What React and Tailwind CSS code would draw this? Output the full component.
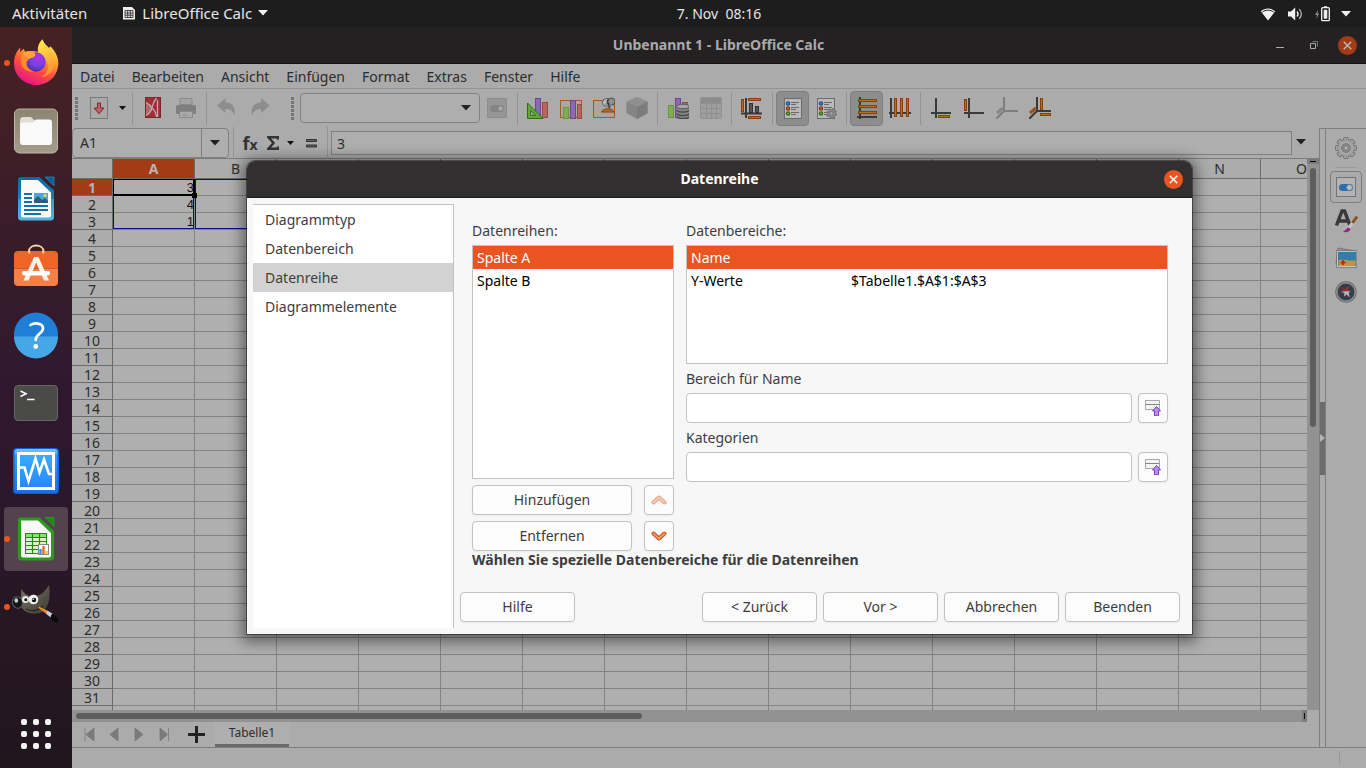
import { useState } from "react";

const columns = "ABCDEFGHIJKLMNO".split("");
const rows = Array.from({ length: 31 }, (_, i) => i + 1);
const values = { 1: 3, 2: 4, 3: 1 };
const menus = ["Datei", "Bearbeiten", "Ansicht", "Einfügen", "Format", "Extras", "Fenster", "Hilfe"];
const pages = ["Diagrammtyp", "Datenbereich", "Datenreihe", "Diagrammelemente"];

function Icon({ size = 22, children }) {
    return (
        <svg width={size} height={size} viewBox={`0 0 ${size} ${size}`} fill="none" aria-hidden="true" className="shrink-0">
            {children}
        </svg>
    )
}

function Caret({ color = "#222" }) {
    return (
        <svg width="10" height="6" viewBox="0 0 10 6" aria-hidden="true" className="shrink-0">
            <path d="M0 0h10L5 5.500z" fill={color} />
        </svg>
    )
}

/* ---------- dock icons ---------- */

function FirefoxIcon() {
    return (
        <Icon size={48}>
            <defs>
                <linearGradient id="ffBody" x1="0.8" y1="0" x2="0.3" y2="1">
                    <stop offset="0" stopColor="#fff44f" />
                    <stop offset="0.35" stopColor="#ffa436" />
                    <stop offset="0.65" stopColor="#ff4b3e" />
                    <stop offset="1" stopColor="#e3108c" />
                </linearGradient>
                <radialGradient id="ffGlobe" cx="0.6" cy="0.3" r="0.8">
                    <stop offset="0" stopColor="#b833e1" />
                    <stop offset="0.5" stopColor="#7542e5" />
                    <stop offset="1" stopColor="#45278d" />
                </radialGradient>
                <linearGradient id="ffFlame" x1="0" y1="0" x2="0.4" y2="1">
                    <stop offset="0" stopColor="#fff44f" />
                    <stop offset="1" stopColor="#ff9a2e" />
                </linearGradient>
            </defs>
            <path d="M8.500 8.500c-.5 2-.5 3.300 0 4.800 1-1.800 1.900-2.600 3.500-3.500.2 1.600.7 2.600 1.700 3.500 4-2 9-1 12.300-.3-.8-4.500.6-9 4.500-12.500 1.300 4.200 4 6 6.300 8.300 1.400-.3 1.200-1.300 1.200-1.800 4.200 4 8.300 9.500 8.300 17C46.300 36.500 36.600 46 24.500 46S2 36.500 2 24.500C2 17.500 4.500 12 8.500 8.500z" fill="url(#ffBody)" />
            <path d="M30.500.5c1.300 4.200 4 6.500 7 9.500 4.800 5 6 10 5 16-1.500 7-7 11.500-13 12 5-3 7.500-8 6.500-13-1-6-7-8-9.500-11-1-4.500.2-9.800 4-13.500z" fill="url(#ffFlame)" opacity="0.85" />
            <circle cx="24" cy="23" r="9.700" fill="url(#ffGlobe)" />
            <path d="M10 14.500c4-3 10-2 13 0 1.300 2.500-1.500 3.800-5 4.800-1.700 1.400-2.800 2.400-3.400 3.700-.8 4.500 2.400 8.500 7.400 9.200-6 1.300-11.500-2-12.700-7.500-.7-3.700-.6-7 .7-10.200z" fill="#ff8a2a" />
            <path d="M11 13.800c4-2 9-1.500 12 .7 1.300 2.500-1.500 3.800-5 4.800-3-.5-6-2.500-7-5.500z" fill="#ffa53a" />
        </Icon>
    )
}

function FilesIcon() {
    return (
        <Icon size={48}>
            <defs>
                <linearGradient id="filesBg" x1="0" y1="0" x2="0" y2="1">
                    <stop offset="0" stopColor="#8d8472" />
                    <stop offset="1" stopColor="#a49c8a" />
                </linearGradient>
            </defs>
            <rect x="2.500" y="2" width="43" height="44" rx="5" fill="url(#filesBg)" stroke="#bdb6a6" />
            <path d="M8 13.500A3.500 3.500 0 0 1 11.500 10H19l3.500 3.500H36a3 3 0 0 1 3 3V25H8z" fill="#e2ded3" />
            <path d="M8 18.500a3 3 0 0 1 3-3h10l3-3h13a3 3 0 0 1 3 3V35a3 3 0 0 1-3 3H11a3 3 0 0 1-3-3z" fill="#fafafa" />
        </Icon>
    )
}

function WriterIcon() {
    return (
        <Icon size={48}>
            <defs>
                <linearGradient id="writerBg" x1="0" y1="0" x2="0" y2="1">
                    <stop offset="0" stopColor="#0a6a9e" />
                    <stop offset="0.5" stopColor="#1c80b3" />
                    <stop offset="0.51" stopColor="#2f9bd0" />
                    <stop offset="1" stopColor="#56b4e0" />
                </linearGradient>
            </defs>
            <path d="M33 2h9v9z" fill="#0d5f8f" stroke="#2a82b5" strokeWidth="0.800" />
            <path d="M9 2h18.500L42 15.500V42a3.500 3.500 0 0 1-3.500 3.500H9.500A3.500 3.500 0 0 1 6 42V5a3 3 0 0 1 3-3z" fill="url(#writerBg)" />
            <path d="M9 5h17l13 12.500V40.500a2 2 0 0 1-2 2H11a2 2 0 0 1-2-2z" fill="#f9f9f9" />
            <path d="M12 19h8M12 23h8M12 27h8M12 31h24M12 35h24M12 39h17" stroke="#1173a8" strokeWidth="1.800" />
            <rect x="22" y="18" width="14" height="10" fill="#4aa6dc" />
            <path d="M22 28v-3l4-4 4 4 3-2 3 3v2z" fill="#2c5f73" />
            <circle cx="33" cy="20.500" r="1.600" fill="#f7d44c" />
        </Icon>
    )
}

function StoreIcon() {
    return (
        <Icon size={48}>
            <path d="M17 8.500c0-8 14.500-8 14.500 0" stroke="#f3d9a5" strokeWidth="1.800" />
            <path d="M2 12a4 4 0 0 1 4-4h36a4 4 0 0 1 4 4v13.500H2z" fill="#f06427" />
            <path d="M2 25.500h44V39a4 4 0 0 1-4 4H6a4 4 0 0 1-4-4z" fill="#f48048" />
            <path d="M17.200 7.500v3M31.300 7.500v3" stroke="#f3d9a5" strokeWidth="1.800" />
            <path d="M22 14h4.500L37 37.500h-5L24.200 19.500 16.500 37.500h-5z" fill="#fdf0e9" />
            <rect x="10" y="28" width="28" height="4.600" rx="2.300" fill="#fff" />
        </Icon>
    )
}

function HelpIcon() {
    return (
        <Icon size={48}>
            <circle cx="24" cy="23.500" r="22" fill="#1f7fd6" />
            <path d="M2 25.500a22 22 0 0 0 44 0z" fill="#46a7e6" />
            <path d="M18.500 14c2.800-2 12.500-3 12.500 3.500 0 5-7.300 5.200-7.300 11.500" stroke="#fff" strokeWidth="2.700" strokeLinecap="round" />
            <circle cx="23.700" cy="35.500" r="2.400" fill="#fff" />
        </Icon>
    )
}

function TerminalIcon() {
    return (
        <Icon size={48}>
            <rect x="2.500" y="6.500" width="43" height="35" rx="3.500" fill="#4a4a49" stroke="#666" />
            <path d="M8.500 12l5.500 2.800L8.500 17.500" stroke="#fff" strokeWidth="1.500" />
            <path d="M15 20.500h7.500" stroke="#fff" strokeWidth="1.500" />
        </Icon>
    )
}

function MonitorIcon() {
    return (
        <Icon size={48}>
            <defs>
                <linearGradient id="vmBg" x1="0" y1="0" x2="0" y2="1">
                    <stop offset="0" stopColor="#37aeff" />
                    <stop offset="1" stopColor="#2a84ff" />
                </linearGradient>
                <linearGradient id="vmRim" x1="0" y1="0" x2="0" y2="1">
                    <stop offset="0" stopColor="#6fd0ff" />
                    <stop offset="0.15" stopColor="#3a9af8" />
                    <stop offset="1" stopColor="#1c6fe6" />
                </linearGradient>
            </defs>
            <rect x="1" y="1" width="46" height="46" rx="4" fill="#0c62dd" />
            <rect x="2.500" y="2" width="43" height="43.500" rx="3" fill="url(#vmRim)" />
            <rect x="6.500" y="6.500" width="35" height="35" fill="url(#vmBg)" stroke="#fff" strokeWidth="3" />
            <path d="M8 20.500h4.500L16.500 34l7-22.500 4 14 4.500-13 5 14.500H41" stroke="#fff" strokeWidth="2.600" />
        </Icon>
    )
}

function CalcIcon() {
    return (
        <Icon size={48}>
            <path d="M33 2.500h9v9z" fill="#1f8a12" stroke="#2f9a20" strokeWidth="0.800" />
            <path d="M9 2.500h18.500L42 16v26a3.500 3.500 0 0 1-3.500 3.500H9.500A3.500 3.500 0 0 1 6 42V5.500a3 3 0 0 1 3-3z" fill="#2c9a1c" />
            <path d="M9 5.500h17L39 18v22.500a2 2 0 0 1-2 2H11a2 2 0 0 1-2-2z" fill="#f9f9f9" />
            <rect x="13.500" y="18.500" width="21" height="20" fill="#d5f5ce" stroke="#1f8a12" />
            <rect x="14" y="19" width="20" height="3.500" fill="#8fdc80" />
            <path d="M13.500 22.500h21M13.500 26.500h21M13.500 30.500h21M13.500 34.500h21M20.500 18.500v20M27.500 18.500v20" stroke="#1f8a12" strokeWidth="1.200" />
            <rect x="26.500" y="29.500" width="10" height="10" fill="#fff" stroke="#888" />
            <path d="M28.500 39v-5" stroke="#2e96e0" strokeWidth="2.400" />
            <path d="M31.500 39v-8" stroke="#e8681f" strokeWidth="2.400" />
            <path d="M34.500 39v-3" stroke="#f3c230" strokeWidth="2.400" />
        </Icon>
    )
}

function GimpIcon() {
    return (
        <Icon size={48}>
            <defs>
                <linearGradient id="gimpFur" x1="0" y1="0" x2="1" y2="1">
                    <stop offset="0" stopColor="#7b7467" />
                    <stop offset="1" stopColor="#3f3b33" />
                </linearGradient>
            </defs>
            <path d="M9.500 6c2 4 5 6.500 9 7.200 8 1 14-3.200 18.500-11.200 1.300 9 .8 19-4 25-4 4-12 4.500-18 2-4-1.600-6-4.500-6.500-8.500z" fill="url(#gimpFur)" />
            <ellipse cx="5.500" cy="19.500" rx="5" ry="5.800" transform="rotate(-20 5.500 19.500)" fill="#15181b" stroke="#59605f" />
            <ellipse cx="4.300" cy="17.500" rx="1.800" ry="2.200" fill="#c8d0d2" />
            <circle cx="13.500" cy="16.500" r="3.500" fill="#e8e8e8" />
            <circle cx="13.800" cy="16.700" r="1.500" fill="#111" />
            <circle cx="21.500" cy="16.500" r="4.800" fill="#f0f0f0" />
            <circle cx="22" cy="17" r="2.200" fill="#111" />
            <circle cx="21.300" cy="16.200" r="0.800" fill="#fff" />
            <path d="M14 26c6 3 13 1.500 17-3" stroke="#25231f" strokeWidth="1.300" />
            <path d="M27 23.500l9 4.500-1.500 3-8-6z" fill="#e8902a" />
            <path d="M35.500 27.500l5 3.200-2 3.500-4.500-3.500z" fill="#c9ccd0" />
            <path d="M39 32c3-1.500 7 1 7.500 7.500-4 0-8-2-7.500-7.500z" fill="#0b0b0b" />
        </Icon>
    )
}

const dockItems = [
    { name: "Firefox", icon: FirefoxIcon, running: true },
    { name: "Dateien", icon: FilesIcon },
    { name: "Writer", icon: WriterIcon },
    { name: "Software", icon: StoreIcon },
    { name: "Hilfe", icon: HelpIcon },
    { name: "Terminal", icon: TerminalIcon },
    { name: "Systemmonitor", icon: MonitorIcon },
    { name: "Calc", icon: CalcIcon, running: true, active: true },
    { name: "GIMP", icon: GimpIcon, running: true },
];

function Dock() {
    return (
        <nav className="flex w-18 shrink-0 flex-col items-center gap-1 bg-linear-to-b from-[#472122] via-[#2f182e] to-[#20161e] py-1">
            {dockItems.map(item => (
                <button
                    key={item.name}
                    aria-label={item.name}
                    className={item.active
                        ? "relative flex size-16 shrink-0 items-center justify-center rounded bg-[#54434f]"
                        : "relative flex size-16 shrink-0 items-center justify-center rounded"}
                >
                    {item.running && <span className="absolute left-0 size-1.5 rounded-full bg-[#e95420]" />}
                    <item.icon />
                </button>
            ))}
            <button aria-label="Anwendungen anzeigen" className="mt-auto mb-[15px] grid grid-cols-3 gap-1.5">
                {rows.slice(0, 9).map(n => <span key={n} className="size-1.5 rounded-xs bg-[#f2f2f2]" />)}
            </button>
        </nav>
    )
}

function TopBar() {
    return (
        <header className="grid h-[27px] shrink-0 grid-cols-[1fr_auto_1fr] items-center bg-[#1d1d1d] pl-18 text-sm text-[#e6e6e6]">
            <div className="-ml-15 flex items-center text-[15px]">
                <button className="mr-[35px]">Aktivitäten</button>
                <button className="flex items-center gap-1.5">
                    <Icon size={14}>
                        <path d="M1 1h9l3 3v9.500H1z" fill="#eee" />
                        <path d="M3 4.500h8v7H3zM3 7h8M3 9.200h8M5.700 4.500v7M8.300 4.500v7" stroke="#333" strokeWidth="0.900" />
                    </Icon>
                    LibreOffice Calc
                    <Caret color="#f2f2f2" />
                </button>
            </div>
            <button className="whitespace-pre">7. Nov  08:16</button>
            <button aria-label="System" className="flex items-center justify-end gap-[11px] pr-[15px]">
                <Icon size={16}>
                    <path d="M8 14.500L.8 5.300C5 1.600 11 1.600 15.200 5.300z" fill="#f2f2f2" />
                    <path d="M2.200 6.200c3.500-2.700 8.100-2.700 11.600 0" stroke="#1d1d1d" />
                </Icon>
                <Icon size={16}>
                    <path d="M1 5.500h3L8.200 1.500v13L4 10.500H1z" fill="#f2f2f2" />
                    <path d="M10 5.500c1.300 1.500 1.300 3.500 0 5" stroke="#f2f2f2" strokeWidth="1.300" />
                    <path d="M12.300 3.200c2.500 3 2.500 6.600 0 9.600" stroke="#bbb" strokeWidth="1.200" />
                </Icon>
                <Icon size={16}>
                    <path d="M4 4L1 9h2l-.5 4L5 7.500H3.500z" fill="#8c8c8c" />
                    <rect x="7.700" y="1.700" width="7.600" height="13" rx="1" stroke="#f2f2f2" strokeWidth="1.300" />
                    <path d="M10 .7h3M10.200 4.200h2.600v8h-2.600z" fill="#f2f2f2" stroke="#f2f2f2" />
                </Icon>
                <Caret color="#f2f2f2" />
            </button>
        </header>
    )
}

function CloseCross({ className, label }) {
    return (
        <button aria-label={label} className={className}>
            <svg width="9" height="9" viewBox="0 0 9 9" stroke="currentColor" strokeWidth="1.400" aria-hidden="true">
                <path d="M.7.7l7.600 7.600M8.300.7L.7 8.300" />
            </svg>
        </button>
    )
}

/* ---------- toolbar ---------- */

function Separator() {
    return <span className="mr-[3px] ml-1 h-[33px] w-px shrink-0 bg-[#939393]" />
}

function Handle() {
    return (
        <svg width="3" height="23" viewBox="0 0 3 23" className="shrink-0" aria-hidden="true">
            <path d="M1.500 0v23" stroke="#757575" strokeWidth="3" strokeDasharray="3 1" />
        </svg>
    )
}

function ToolButton({ label, pressed, children }) {
    return (
        <button
            aria-label={label}
            className={pressed
                ? "flex h-[35px] w-[33px] shrink-0 items-center justify-center rounded border border-[#7f7f7f] bg-[#8d8d8d] pb-px pl-px"
                : "flex h-[35px] w-[33px] shrink-0 items-center justify-center pb-px pl-px"}
        >
            <Icon>{children}</Icon>
        </button>
    )
}

const Bar = ({ x, y, w, h, fill, stroke }) => (
    <rect x={x + 0.5} y={y + 0.5} width={w - 1} height={h - 1} fill={fill} stroke={stroke} />
);

const green = { fill: "#7fae4c", stroke: "#67973a" };
const purple = { fill: "#8c68ac", stroke: "#6f4696" };
const red = { fill: "#b3685b", stroke: "#9c4a3e" };
const orange = { fill: "#b5701f", stroke: "#8a3f08" };

function LegendRows() {
    return (
        <>
            <rect x="2.500" y="1.500" width="17" height="20" fill="#b9b9b9" stroke="#6c6c6c" />
            <circle cx="6" cy="6.500" r="1.600" stroke="#1b4f8f" strokeWidth="1.300" fill="#4b86c6" />
            <circle cx="6" cy="11.500" r="1.600" stroke="#8a3110" strokeWidth="1.300" fill="#c4713f" />
            <circle cx="6" cy="16.500" r="1.600" stroke="#2c7010" strokeWidth="1.300" fill="#6bb04a" />
            <path d="M9 5.500h8M9 7.500h5M9 10.500h8M9 12.500h5M9 15.500h8M9 17.500h5" stroke="#6a6a6a" />
        </>
    )
}

function Toolbar() {
    return (
        <div className="flex h-[39px] shrink-0 items-center pl-[3px]">
            <Handle />
            <button aria-label="Speichern" className="ml-[5px] flex w-[45px] shrink-0 items-center justify-between pr-[2px] pb-px pl-[5px]">
                <Icon>
                    <rect x="2.500" y="0.500" width="17" height="21" fill="#a8a8a8" stroke="#7a7a7a" />
                    <path d="M9.500 6h3v5h3.300L11 16.800 6.200 11h3.300z" fill="#b8686c" stroke="#8f1b23" />
                </Icon>
                <svg width="7" height="4" viewBox="0 0 7 4" aria-hidden="true"><path d="M0 0h7L3.500 4z" fill="#111" /></svg>
            </button>
            <Separator />
            <ToolButton label="Als PDF exportieren">
                <rect x="3.500" y="0.500" width="15" height="20" fill="#a03038" stroke="#7c2228" />
                <path d="M4 5.500c3 1.500 5 3.500 6 5.500-1 3.500-3.500 6-6 7.500z" fill="#b0666a" />
                <path d="M4 5.500c3 1.500 5 3.500 6 5.500-1 3.500-3.500 6-6 7.500M14.500 1c-2.500 3-4 6.500-4.500 10 2.500 2 4 5 4.500 9M15.500 3v17" stroke="#bfb0b0" strokeWidth="1.200" />
            </ToolButton>
            <ToolButton label="Drucken">
                <path d="M5 1.500h12v6H5z" fill="#a3a3a3" stroke="#898989" />
                <rect x="1" y="8" width="20" height="9" rx="1.500" fill="#7f7f7f" />
                <path d="M4.500 14.500h13v6h-13z" fill="#aaa" stroke="#8a8a8a" />
                <path d="M7 18h5" stroke="#8a8a8a" />
            </ToolButton>
            <Separator />
            <ToolButton label="Rückgängig">
                <path d="M1 8.500L9.500 1v4.500c7 0 10.500 4.500 9 13-1.300-4.500-4-6.500-9-6.500V16z" fill="#8d8d8d" />
            </ToolButton>
            <ToolButton label="Wiederherstellen">
                <path d="M20.500 8.500L12 1v4.500c-7 0-10.500 4.500-9 13 1.300-4.500 4-6.500 9-6.500V16z" fill="#8d8d8d" />
            </ToolButton>
            <span className="w-[15px] shrink-0" />
            <Handle />
            <span className="relative mb-px ml-1.5 flex shrink-0 items-center">
                <select aria-label="Diagrammelement auswählen" className="h-[30px] w-[180px] appearance-none rounded border border-[#828282] bg-[#aeaeae] px-2 text-sm">
                    <option></option>
                </select>
                <span className="pointer-events-none absolute right-[9px]"><Caret /></span>
            </span>
            <ToolButton label="Auswahl formatieren">
                <rect x="1.500" y="1.500" width="19" height="19" fill="#969696" stroke="#8d8d8d" />
                <rect x="4" y="8" width="14" height="7" rx="3.500" fill="#848484" />
                <circle cx="14.500" cy="11.500" r="2.800" fill="#a8a8a8" stroke="#808080" />
            </ToolButton>
            <Separator />
            <ToolButton label="Diagrammtyp">
                <Bar x={8} y={1} w={6} h={19} {...purple} />
                <Bar x={15} y={5} w={6} h={16} {...red} />
                <path d="M.5 6v15.500H16z" fill="#63a63b" stroke="#2f6d10" />
                <path d="M3.700 13.500v4.800h5z" fill="#a5b59c" stroke="#2f6d10" />
            </ToolButton>
            <ToolButton label="Diagrammfläche">
                <rect x="0.500" y="3.500" width="21" height="17" fill="#aca7a4" stroke="#a3592a" />
                <Bar x={3} y={10} w={6} h={12} {...green} />
                <Bar x={10} y={3} w={6} h={19} {...purple} />
                <Bar x={17} y={7} w={5} h={15} {...red} />
            </ToolButton>
            <ToolButton label="Diagrammwand">
                <rect x="0.500" y="3.500" width="21" height="17" fill="#a9a5a2" stroke="#a3592a" />
                <circle cx="13.500" cy="5.500" r="4" fill="#c0c0c0" stroke="#555" />
                <circle cx="18.500" cy="4.500" r="3.500" fill="#909090" stroke="#4d4d4d" />
                <path d="M12 8l4 1v4" stroke="#8b8b8b" strokeWidth="4" />
                <path d="M15.500 2c-2 2-1.500 4.500 0 5l1 4" stroke="#333" strokeWidth="1.200" />
                <path d="M8.500 15c1.500-2.500 3.500-3 6.500-3s5 1 6.500 3z" fill="#bd6d1b" stroke="#86430a" />
            </ToolButton>
            <ToolButton label="3D-Ansicht">
                <path d="M11 0l10.500 4.800v11.500L11 22 .5 16.300V4.800z" fill="#858585" />
                <path d="M11 0l10.500 4.800L11 10.300.5 4.800z" fill="#8f8f8f" />
                <path d="M11 10.300V22L21.500 16.300V4.800z" fill="#7c7c7c" />
            </ToolButton>
            <Separator />
            <ToolButton label="Datenbereiche">
                <Bar x={1} y={8} w={6} h={13} {...green} />
                <Bar x={8} y={1} w={6} h={20} {...purple} />
                <Bar x={15} y={5} w={6} h={6} {...red} />
                <path d="M9.500 10v10c0 3.200 13 3.200 13 0V10z" fill="#848484" />
                <ellipse cx="16" cy="9.500" rx="6.300" ry="2.300" fill="#a5a5a5" stroke="#5a5a5a" />
                <path d="M9.700 13c1 2.800 11.600 2.800 12.600 0M9.700 16.500c1 2.800 11.600 2.800 12.600 0M9.700 19.500c1 2.800 11.600 2.800 12.600 0" stroke="#474747" strokeWidth="1.200" />
            </ToolButton>
            <ToolButton label="Datentabelle">
                <rect x="0.500" y="0.500" width="21" height="21" rx="1" fill="#9e9e9e" stroke="#929292" />
                <path d="M1 3.500h20" stroke="#8c8c8c" strokeWidth="5" />
                <path d="M1 6.500h20M1 11.500h20M1 16.500h20M6.500 1v20M11.500 1v20M16.500 1v20" stroke="#8f8f8f" />
            </ToolButton>
            <Separator />
            <ToolButton label="Titel">
                <path d="M5 1v20M0 16.500h21" stroke="#3a3a3a" strokeWidth="2" />
                <Bar x={0} y={2} w={3} h={13} {...orange} />
                <Bar x={7} y={1} w={13} h={3} {...orange} />
                <Bar x={7} y={19} w={13} h={3} {...orange} />
                <Bar x={8} y={6} w={4} h={10} fill="#555" stroke="#333" />
                <Bar x={14} y={9} w={4} h={7} fill="#555" stroke="#333" />
            </ToolButton>
            <Separator />
            <ToolButton label="Legende ein-/ausblenden" pressed>
                <LegendRows />
            </ToolButton>
            <ToolButton label="Legende">
                <LegendRows />
                <circle cx="16.500" cy="16.500" r="4.500" fill="#8a8a8a" stroke="#747474" strokeWidth="2" strokeDasharray="2 1.500" />
                <circle cx="16.500" cy="16.500" r="1.800" fill="#aaa" stroke="#707070" />
            </ToolButton>
            <Separator />
            <ToolButton label="Horizontale Gitter" pressed>
                <path d="M4 0v22M1 20h20" stroke="#3a3a3a" strokeWidth="2" />
                <Bar x={2} y={2} w={19} h={3} {...orange} />
                <Bar x={2} y={8} w={19} h={3} {...orange} />
                <Bar x={2} y={14} w={19} h={3} {...orange} />
            </ToolButton>
            <ToolButton label="Vertikale Gitter">
                <path d="M2 1v20M0 16h22" stroke="#3a3a3a" strokeWidth="2" />
                <Bar x={5} y={1} w={3} h={19} {...orange} />
                <Bar x={11} y={1} w={3} h={19} {...orange} />
                <Bar x={17} y={1} w={3} h={19} {...orange} />
            </ToolButton>
            <Separator />
            <ToolButton label="X-Achse">
                <path d="M6 1v20M1 16h20" stroke="#3a3a3a" strokeWidth="2" />
                <Bar x={8} y={18} w={12} h={3} {...orange} />
            </ToolButton>
            <ToolButton label="Y-Achse">
                <path d="M6 1v20M1 16h20" stroke="#3a3a3a" strokeWidth="2" />
                <Bar x={1} y={2} w={3} h={12} {...orange} />
            </ToolButton>
            <ToolButton label="Z-Achse">
                <path d="M8 0v14h14M8 14l-8 8" stroke="#7e7e7e" strokeWidth="2" />
                <path d="M1 16l6-5" stroke="#868686" strokeWidth="3" />
            </ToolButton>
            <ToolButton label="Alle Achsen">
                <path d="M8 0v14h14M8 14l-8 8" stroke="#3a3a3a" strokeWidth="2" />
                <path d="M1 16l6-5" stroke="#9a5212" strokeWidth="3" />
                <Bar x={11} y={1} w={3} h={12} {...orange} />
                <Bar x={11} y={16} w={11} h={3} {...orange} />
            </ToolButton>
        </div>
    )
}

function FormulaBar() {
    return (
        <div className="flex h-[31px] shrink-0 items-start border-b border-[#7b7b7b]">
            <div className="flex h-[30px] w-[157px] shrink-0 rounded border border-[#808080] bg-[#aeaeae]">
                <input aria-label="Namensfeld" defaultValue="A1" className="w-[129px] border-r border-[#808080] px-[7px] text-sm text-[#2c2c2c]" />
                <button aria-label="Namen öffnen" className="flex flex-1 items-center justify-center"><Caret /></button>
            </div>
            <div className="flex h-[30px] shrink-0 items-center">
                <Separator />
                <button aria-label="Funktions-Assistent" className="ml-1 w-[18px] text-lg font-bold text-[#333]">f<span className="text-sm">x</span></button>
                <button aria-label="Funktion auswählen" className="ml-2 flex items-center gap-2">
                    <svg width="12" height="14" viewBox="0 0 12 14" aria-hidden="true"><path d="M11 3.500V1.300H1.500L6.500 7l-5 5.700H11v-2.200" fill="none" stroke="#333" strokeWidth="2.400" /></svg>
                    <svg width="7" height="4" viewBox="0 0 7 4" aria-hidden="true"><path d="M0 0h7L3.500 4z" fill="#111" /></svg>
                </button>
                <button aria-label="Formel" className="ml-3">
                    <svg width="11" height="9" viewBox="0 0 11 9" aria-hidden="true"><path d="M.5.500h10v2H.5zM.5 6h10v2H.5z" fill="#666" stroke="#333" /></svg>
                </button>
                <span className="w-1.5" />
                <Separator />
            </div>
            <input aria-label="Eingabezeile" defaultValue="3" className="mt-[3px] h-6 min-w-0 flex-1 border border-[#808080] bg-[#aeaeae] px-[5px] text-sm text-[#2c2c2c]" />
            <button aria-label="Eingabezeile erweitern" className="flex h-7 w-[27px] items-center justify-start pl-1"><Caret /></button>
        </div>
    )
}

function Sheet() {
    return (
        <div className="relative min-w-0 flex-1 overflow-hidden bg-[#afafaf]">
            <table className="border-separate border-spacing-0 text-[#2c2c2c]">
                <thead>
                    <tr>
                        <th className="h-5 w-[41px] min-w-[41px] border-r border-b border-[#6b6b6b] bg-[#acacac] p-0"></th>
                        {columns.map(col => (
                            <th
                                key={col}
                                className={col === "A"
                                    ? "h-5 min-w-[82px] border-r border-b border-[#6b6b6b] bg-[#a33b17] p-0 text-sm leading-4 font-bold text-[#b5b5b5]"
                                    : "h-5 min-w-[82px] border-r border-b border-[#6b6b6b] bg-[#acacac] p-0 text-sm leading-4 font-normal"}
                            >
                                {col}
                            </th>
                        ))}
                    </tr>
                </thead>
                <tbody>
                    {rows.map(row => (
                        <tr key={row}>
                            <th
                                className={row === 1
                                    ? "h-[17px] border-r border-b border-[#6b6b6b] bg-[#a33b17] p-0 pt-px text-sm leading-[15px] font-bold text-[#b5b5b5]"
                                    : "h-[17px] border-r border-b border-[#6b6b6b] bg-[#acacac] p-0 pt-px text-sm leading-[15px] font-normal"}
                            >
                                {row}
                            </th>
                            {columns.map(col => (
                                <td key={col} className="h-[17px] border-r border-b border-[#838383] p-0 pt-px text-right font-['Liberation_Sans',sans-serif] text-[13px] leading-[15px] text-[#111]">
                                    {col === "A" && values[row]}
                                </td>
                            ))}
                        </tr>
                    ))}
                    <tr>
                        <th className="h-[17px] border-r border-[#6b6b6b] bg-[#acacac] p-0"></th>
                        {columns.map(col => <td key={col} className="border-r border-[#838383] p-0"></td>)}
                    </tr>
                </tbody>
            </table>
            {/* range frames and the cell cursor */}
            <div className="absolute top-5 left-[41px] h-[50px] w-[81px] border border-[#0a0a95]" />
            <div className="absolute top-5 left-[123px] h-[50px] w-[82px] border border-[#0a0a95]" />
            <div className="absolute top-5 left-[41px] h-[17px] w-[82px] border border-r-2 border-b-2 border-black" />
            <div className="absolute top-[34px] left-[120px] size-[5px] bg-black" />
        </div>
    )
}

function SheetArea() {
    return (
        <div className="flex min-w-0 flex-1 flex-col">
            <FormulaBar />
            <div className="flex min-h-0 flex-1">
                <Sheet />
                <div className="w-3 shrink-0 bg-[#929292]">
                    <div className="flex h-[5px] items-center justify-center bg-[#7c7c7c]"><span className="h-px w-1.5 bg-black" /></div>
                    <div className="mx-auto mt-1 h-[47%] w-1.5 rounded-full bg-[#5e5e5e]" />
                </div>
            </div>
            <div className="mr-3 flex h-3 shrink-0 items-center bg-[#929292] pl-1">
                <div className="h-1.5 w-[46%] rounded-full bg-[#5e5e5e]" />
                <div className="ml-auto flex h-full w-[5px] items-center justify-center bg-[#7c7c7c]"><span className="h-1.5 w-px bg-black" /></div>
            </div>
            <div className="flex h-[25px] shrink-0 items-stretch pl-[10px]">
                <div className="flex gap-[11px] pr-4">
                    {["M3 1v13M12 1v13L4 7.500z", "M11 1v13L3 7.500z", "M3 1v13l8-6.500z", "M11.500 1v13M3 1v13l7.500-6.500z"].map(d => (
                        <button key={d} aria-label="Tabelle wechseln">
                            <svg width="14" height="15" viewBox="0 0 14 15" aria-hidden="true"><path d={d} fill="#7a7a7a" stroke="#7a7a7a" strokeWidth="0.800" /></svg>
                        </button>
                    ))}
                </div>
                <button aria-label="Tabelle einfügen" className="mr-[10px] ml-px">
                    <svg width="17" height="17" viewBox="0 0 17 17" aria-hidden="true"><path d="M8.500 0v17M0 8.500h17" stroke="#222" strokeWidth="3" /></svg>
                </button>
                <button className="w-[74px] border-b-3 border-[#696969] bg-[#afafaf] text-xs text-[#2c2c2c]">Tabelle1</button>
            </div>
        </div>
    )
}

const teeth = [0, 45, 90, 135, 180, 225, 270, 315];

function Sidebar() {
    return (
        <>
            <div className="flex w-[7px] shrink-0 items-center border-x border-t border-[#7f7f7f]">
                <button aria-label="Seitenleiste" className="flex h-[73px] w-full items-center bg-[#6c6c6c]">
                    <svg width="5" height="8" viewBox="0 0 5 8" aria-hidden="true"><path d="M0 0l5 4-5 4z" fill="#b5b5b5" /></svg>
                </button>
            </div>
            <aside className="flex w-10 shrink-0 flex-col items-center border-t border-[#7f7f7f] pt-1">
                <button aria-label="Einstellungen" className="flex h-[30px] shrink-0 items-center">
                    <Icon>
                        {teeth.map(a => (
                            <rect key={a} x="8.500" y="0.500" width="5" height="5" rx="1" fill="#a5a5a5" stroke="#707070" transform={`rotate(${a} 11 11)`} />
                        ))}
                        <circle cx="11" cy="11" r="8.300" fill="#a5a5a5" stroke="#808080" strokeWidth="0.700" />
                        <circle cx="11" cy="11" r="4.300" fill="#8f8f8f" stroke="#757575" />
                        <circle cx="11" cy="11" r="2.200" fill="#b5b5b5" stroke="#757575" />
                    </Icon>
                </button>
                <span className="mt-1 mb-[3px] h-px w-[22px] shrink-0 bg-[#999]" />
                <button aria-label="Eigenschaften" className="flex size-8 shrink-0 items-center justify-center rounded border border-[#7d7d7d]">
                    <Icon>
                        <rect x="1.500" y="1.500" width="19" height="19" fill="#b3b3b3" stroke="#737373" />
                        <rect x="4" y="8" width="14" height="7" rx="3.500" fill="#2d6da8" />
                        <circle cx="14.500" cy="11.500" r="3" fill="#bdbdbd" stroke="#5d7d9a" />
                    </Icon>
                </button>
                <button aria-label="Formatvorlagen" className="flex h-9 shrink-0 items-center">
                    <Icon size={24}>
                        <path d="M2.500 16.500L8 2h2.500l5.500 14.500M5 12h8.500" stroke="#3a3a3a" strokeWidth="3.500" />
                        <path d="M23 7.500l-5 7" stroke="#8a561c" strokeWidth="3" />
                        <path d="M18.500 14l-4 5" stroke="#c4c4c4" strokeWidth="3" />
                        <path d="M15 18.500c-2 0-3.500 3-6 4 3.500 1.500 7 .5 7.500-2.500z" fill="#8e2d86" />
                    </Icon>
                </button>
                <button aria-label="Galerie" className="flex h-[38px] shrink-0 items-center">
                    <Icon>
                        <path d="M3 1l17 3-1 15L1 17z" fill="#7fa59b" stroke="#777" />
                        <rect x="2.500" y="4.500" width="19" height="15" fill="#2f7fae" stroke="#c6c6c6" />
                        <path d="M3.500 13c5-2 10 2 17 0v6h-17z" fill="#bd9448" />
                        <path d="M8 13v5M5.500 15.500h5" stroke="#b5301b" strokeWidth="2" />
                        <rect x="1.700" y="3.700" width="20" height="17" stroke="#6e6e6e" strokeWidth="0.700" />
                    </Icon>
                </button>
                <button aria-label="Navigator" className="flex h-[30px] shrink-0 items-center">
                    <Icon>
                        <circle cx="11" cy="11" r="9.500" fill="#333d4e" stroke="#6b6b6b" strokeWidth="2.500" />
                        <circle cx="11" cy="11" r="9.300" stroke="#a0a0a0" strokeWidth="0.900" />
                        <path d="M12.500 9l3 2-2 .8 1.500 4.700-3.500-3-2.500 2 .5-3.500L6 11l3.500-1.500z" fill="#b8b8b8" />
                        <path d="M14.500 4.500L13 9l5 1.500-6.500-.3L4 11l4-2.500L6.500 6l3.500 2z" fill="#a12a30" />
                    </Icon>
                </button>
            </aside>
        </>
    )
}

/* ---------- dialog ---------- */

function DialogButton({ className = "", label, children }) {
    return (
        <button aria-label={label} className={`h-[30px] rounded border border-[#c2c2c2] bg-[#fcfcfc] text-sm text-[#3d3d3d] shadow-xs ${className}`}>
            {children}
        </button>
    )
}

function RangeField({ id, label }) {
    return (
        <div className="pt-[5px]">
            <label htmlFor={id} className="block h-5 text-sm">{label}</label>
            <div className="mt-1 flex gap-1.5">
                <input id={id} className="h-[30px] min-w-0 flex-1 rounded border border-[#c2c2c2] bg-white px-2 text-sm" />
                <button aria-label="Datenbereich auswählen" className="flex size-[30px] items-center justify-center rounded border border-[#c2c2c2] bg-[#fcfcfc] shadow-xs">
                    <Icon size={16}>
                        <path d="M.5.500h14v9H.5z" fill="#f4f4f4" stroke="#a8a8a8" />
                        <path d="M.5 4.500h14" stroke="#7f8a83" />
                        <path d="M11.500 6.500l4 4.500h-2v5h-4v-5h-2z" fill="#b88df0" stroke="#7a3fc0" />
                    </Icon>
                </button>
            </div>
        </div>
    )
}

function Chevron({ up }) {
    const d = up ? "M2.500 8.500L8 3.500l5.500 5" : "M2.500 3.500L8 8.500l5.500-5";

    return (
        <svg width="16" height="12" viewBox="0 0 16 12" fill="none" strokeLinecap="round" strokeLinejoin="round" aria-hidden="true" className={up ? "mx-auto opacity-50" : "mx-auto"}>
            <path d={d} stroke="#cf4d17" strokeWidth="4" />
            <path d={d} stroke="#f09a62" strokeWidth="2" />
        </svg>
    )
}

function DataSeriesDialog() {
    const [page, setPage] = useState("Datenreihe");
    const [series, setSeries] = useState("Spalte A");

    return (
        <div role="dialog" aria-label="Datenreihe" className="w-[945px] max-w-full rounded-t-lg bg-[#f7f7f7] text-[#3d3d3d] shadow-[0_3px_14px_5px_rgba(0,0,0,0.45)] outline outline-black/40">
            <div className="flex h-[37px] items-center rounded-t-lg border-b border-[#1e1c1d] bg-[#322f30] pr-[9px] pl-2">
                <span className="w-5" />
                <h2 className="flex-1 text-center text-sm font-bold text-white">Datenreihe</h2>
                <CloseCross label="Schließen" className="flex size-[19px] items-center justify-center rounded-full bg-[#e95420] text-white" />
            </div>
            <div className="flex p-1.5 pr-3">
                <ul className="w-[201px] shrink-0 border-t border-r border-[#c2c2c2] bg-white">
                    {pages.map(name => (
                        <li key={name}>
                            <button
                                onClick={() => setPage(name)}
                                className={name === page
                                    ? "block h-[29px] w-full bg-[#d2d2d2] px-3 text-left text-sm"
                                    : "block h-[29px] w-full px-3 text-left text-sm"}
                            >
                                {name}
                            </button>
                        </li>
                    ))}
                </ul>
                <div className="flex flex-1 flex-col pt-[17px] pb-1.5 pl-1.5">
                    <div className="flex gap-3 px-3">
                        <div className="w-[202px] shrink-0">
                            <div id="seriesLabel" className="h-5 text-sm">Datenreihen:</div>
                            <ul role="listbox" aria-labelledby="seriesLabel" className="mt-1 h-[234px] border border-[#c2c2c2] bg-white text-sm text-black">
                                {["Spalte A", "Spalte B"].map(name => (
                                    <li
                                        key={name}
                                        role="option"
                                        aria-selected={name === series}
                                        onClick={() => setSeries(name)}
                                        className={name === series
                                            ? "h-[23px] bg-[#e95420] px-1 leading-[23px] text-white"
                                            : "h-[23px] px-1 leading-[23px]"}
                                    >
                                        {name}
                                    </li>
                                ))}
                            </ul>
                            <div className="mt-1.5 grid grid-cols-[1fr_30px] gap-x-3 gap-y-1.5">
                                <DialogButton>Hinzufügen</DialogButton>
                                <DialogButton label="Nach oben"><Chevron up /></DialogButton>
                                <DialogButton>Entfernen</DialogButton>
                                <DialogButton label="Nach unten"><Chevron /></DialogButton>
                            </div>
                        </div>
                        <div className="min-w-0 flex-1">
                            <div id="rangesLabel" className="h-5 text-sm">Datenbereiche:</div>
                            <div className="mt-1 h-[119px] border border-[#c2c2c2] bg-white">
                                <table aria-labelledby="rangesLabel" className="w-full table-fixed text-left text-sm leading-[23px] text-black">
                                    <tbody>
                                        <tr className="bg-[#e95420] text-white">
                                            <td className="w-40 px-1 py-0">Name</td>
                                            <td className="px-1 py-0"></td>
                                        </tr>
                                        <tr>
                                            <td className="px-1 py-0">Y-Werte</td>
                                            <td className="px-1 py-0">$Tabelle1.$A$1:$A$3</td>
                                        </tr>
                                    </tbody>
                                </table>
                            </div>
                            <RangeField id="nameRange" label="Bereich für Name" />
                            <RangeField id="categories" label="Kategorien" />
                        </div>
                    </div>
                    <p className="px-3 text-sm leading-[18px] font-bold">Wählen Sie spezielle Datenbereiche für die Datenreihen</p>
                    <div className="mt-[23px] flex gap-1.5">
                        <DialogButton className="mr-auto w-[115px]">Hilfe</DialogButton>
                        <DialogButton className="w-[115px]">{"< Zurück"}</DialogButton>
                        <DialogButton className="w-[115px]">{"Vor >"}</DialogButton>
                        <DialogButton className="w-[115px]">Abbrechen</DialogButton>
                        <DialogButton className="w-[115px]">Beenden</DialogButton>
                    </div>
                </div>
            </div>
        </div>
    )
}

export default function App() {
    return (
        <div className="flex h-screen flex-col overflow-hidden bg-[#ababab] font-['Noto_Sans',sans-serif]">
            <TopBar />
            <div className="flex min-h-0 flex-1">
                <Dock />
                <main className="relative flex min-w-0 flex-1 flex-col">
                    <div className="grid h-[37px] shrink-0 grid-cols-[1fr_auto_1fr] items-center border-b border-[#141213] bg-[#242122] pr-[9px] pl-2 text-[#aaa]">
                        <span />
                        <h1 className="text-sm font-bold">Unbenannt 1 - LibreOffice Calc</h1>
                        <div className="flex items-center justify-end gap-[26px]">
                            <button aria-label="Minimieren"><svg width="8" height="8" viewBox="0 0 8 8" aria-hidden="true"><path d="M0 6.500h8" stroke="#aaa" /></svg></button>
                            <button aria-label="Wiederherstellen"><svg width="8" height="8" viewBox="0 0 8 8" fill="none" aria-hidden="true"><path d="M.5 2.500h5v5h-5z" stroke="#aaa" /><path d="M2.500.5h5v5" stroke="#777" /></svg></button>
                            <CloseCross label="Fenster schließen" className="-ml-1.5 flex size-[19px] items-center justify-center rounded-full bg-[#a33b17] text-[#bbb]" />
                        </div>
                    </div>
                    <div className="flex h-[25px] shrink-0 items-center gap-[17px] border-b border-[#939393] px-2 pt-0.5 text-sm text-[#2c2c2c]">
                        {menus.map(menu => <button key={menu}>{menu}</button>)}
                    </div>
                    <Toolbar />
                    <div className="flex min-h-0 flex-1">
                        <SheetArea />
                        <Sidebar />
                    </div>
                    <footer className="flex h-[21px] shrink-0 items-center justify-end border-t border-[#7f7f7f] pr-[26px]">
                        <span className="h-3.5 w-px bg-[#979797]" />
                    </footer>
                    <div className="absolute inset-0 flex items-center justify-center pl-px">
                        <DataSeriesDialog />
                    </div>
                </main>
            </div>
        </div>
    )
}
